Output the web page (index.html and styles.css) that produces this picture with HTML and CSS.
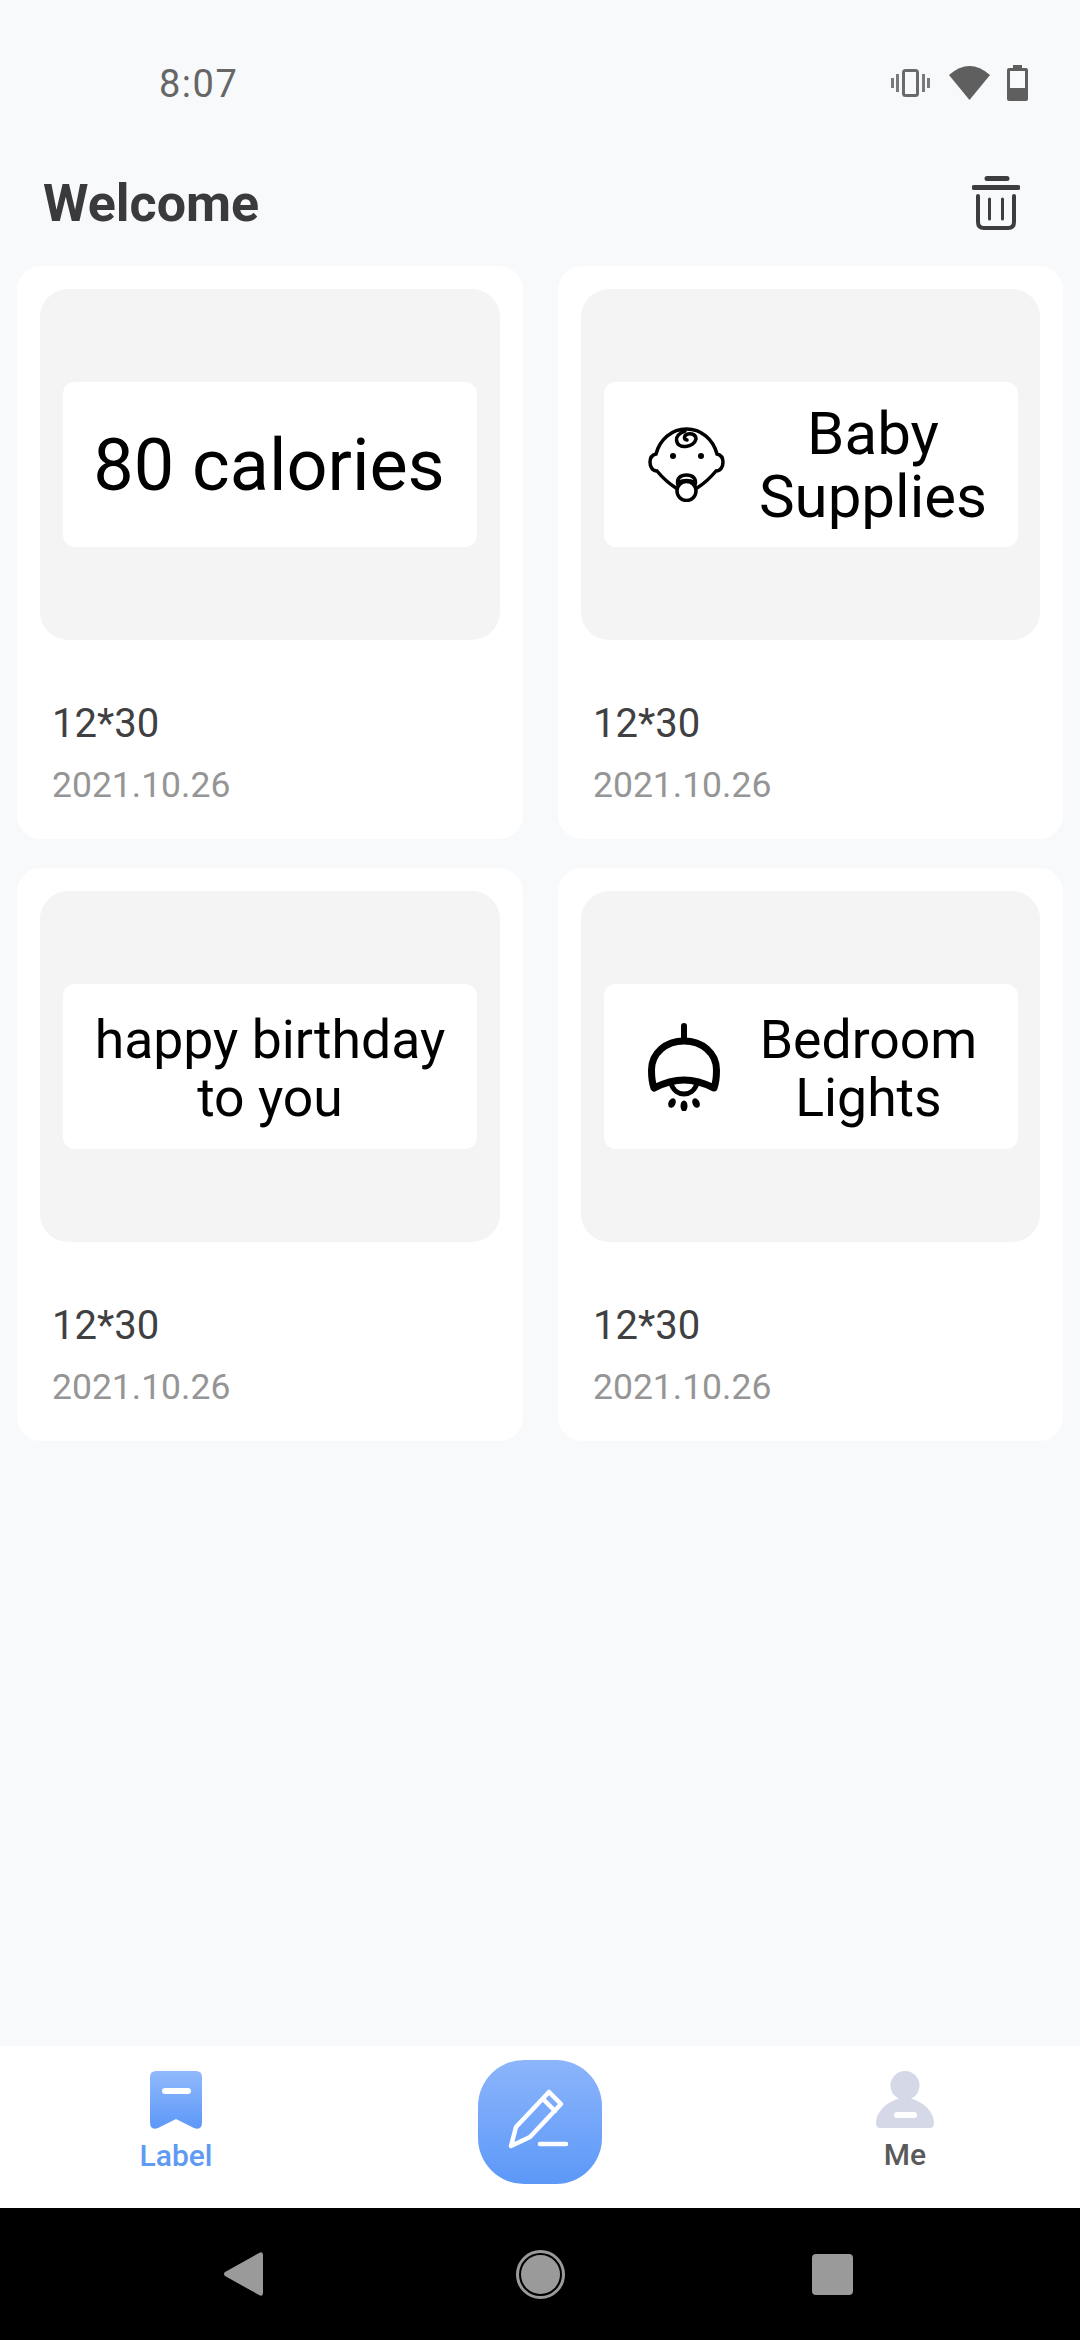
FILE: index.html
```html
<!DOCTYPE html>
<html lang="en">
<head>
<meta charset="utf-8">
<title>Welcome</title>
<link rel="stylesheet" href="styles.css">
</head>
<body>
<div class="screen">
  <div class="status">
    <span class="time">8:07</span>
    <div class="status-icons">
      <svg class="ic-vib" width="39" height="28" viewBox="0 0 39 28"><rect x="12.500" y="1.500" width="14" height="25" rx="2" fill="none" stroke="#6a6a6a" stroke-width="3"/><path d="M5 5h3v18H5zM31 5h3v18h-3zM0 9h3v10H0zM36 9h3v10h-3z" fill="#7a7a7a"/></svg>
      <svg class="ic-wifi" width="41" height="34" viewBox="0 0 41 34"><path d="M20.500 34L0 9Q20.500-9 41 9Z" fill="#5f5f5f"/></svg>
      <svg class="ic-bat" width="21" height="36" viewBox="0 0 21 36"><path d="M6 0h9v3h4q2 0 2 2v29q0 2-2 2H2q-2 0-2-2V5q0-2 2-2h4z" fill="#5f5f5f"/><rect x="3" y="6" width="15" height="17" fill="#f8f9fb"/></svg>
    </div>
  </div>
  <header class="head">
    <h1 class="title">Welcome</h1>
    <svg class="trash" width="48" height="54" viewBox="0 0 48 54"><path d="M15 2.500h20M2 11.500h44" fill="none" stroke="#3d3d40" stroke-width="5" stroke-linecap="round"/><path d="M6 20v26q0 6 6 6h24q6 0 6-6V20" fill="none" stroke="#3d3d40" stroke-width="4" stroke-linecap="round"/><path d="M17.500 23v20M30.500 23v20" fill="none" stroke="#3d3d40" stroke-width="3" stroke-linecap="round"/></svg>
  </header>
  <main class="grid">
    <article class="card">
      <div class="thumb"><div class="tag"><div class="tag-text big">80 calories</div></div></div>
      <div class="size">12*30</div>
      <div class="date">2021.10.26</div>
    </article>
    <article class="card">
      <div class="thumb"><div class="tag with-icon">
        <svg class="tag-icon" width="77" height="75" viewBox="0 0 77 75" fill="none" stroke="#000" stroke-width="3.500" stroke-linecap="round"><path d="M28 61C20 56 14 50 9 44 4 44 2 39 2 35 2 31 4 28 8 27 12 12 24 2 38.500 2 53 2 65 12 69 27 73 28 75 31 75 35 75 39 73 44 68 44 63 50 57 56 49 61"/><path d="M37 4C31 6 28 10 28.500 13 29 18 33 20 38 19.500 43 19 47 16 48 12 48 8 44 6 40 7 36 8 35 12 39 13"/><circle cx="25" cy="29" r="3" fill="#000" stroke="none"/><circle cx="53" cy="29" r="3" fill="#000" stroke="none"/><circle cx="38.500" cy="64" r="9.500"/><path d="M30 58C28 51 33 48 38.500 48 44 48 49 51 47 58M31 55C35 53 42 53 46 55"/></svg>
        <div class="tag-text mid">Baby Supplies</div>
      </div></div>
      <div class="size">12*30</div>
      <div class="date">2021.10.26</div>
    </article>
    <article class="card">
      <div class="thumb"><div class="tag"><div class="tag-text small">happy birthday<br>to you</div></div></div>
      <div class="size">12*30</div>
      <div class="date">2021.10.26</div>
    </article>
    <article class="card">
      <div class="thumb"><div class="tag with-icon">
        <svg class="tag-icon" width="72" height="88" viewBox="0 0 72 88" fill="none" stroke="#000" stroke-width="7" stroke-linecap="round" stroke-linejoin="round"><path d="M36 3V17" stroke-width="6"/><path d="M6 65C3.500 58 3.500 52 3.500 47 3.500 30 18 18 36 18 54 18 68.500 30 68.500 47 68.500 52 68.500 58 66 65 56 60 46 57 36 57 26 57 16 60 6 65Z"/><path d="M23 60C25 68 31 71 36 71 41 71 47 68 49 60" stroke-width="5"/><ellipse cx="24" cy="80" rx="3.500" ry="5" fill="#000" stroke="none" transform="rotate(25 24 80)"/><ellipse cx="36" cy="83" rx="3.500" ry="5.500" fill="#000" stroke="none"/><ellipse cx="48" cy="80" rx="3.500" ry="5" fill="#000" stroke="none" transform="rotate(-25 48 80)"/></svg>
        <div class="tag-text small">Bedroom<br>Lights</div>
      </div></div>
      <div class="size">12*30</div>
      <div class="date">2021.10.26</div>
    </article>
  </main>
  <nav class="tabbar">
    <div class="tab active">
      <svg width="52" height="58" viewBox="0 0 52 58"><defs><linearGradient id="gl" x1="0" y1="0" x2="0" y2="1"><stop offset="0" stop-color="#91b9fc"/><stop offset="1" stop-color="#5c98f8"/></linearGradient></defs><path d="M6 0H46Q52 0 52 6V51Q52 60 44 57L26 48 8 57Q0 60 0 51V6Q0 0 6 0Z" fill="url(#gl)"/><rect x="12" y="17" width="29" height="6" rx="3" fill="#fff"/></svg>
      <span class="tab-label">Label</span>
    </div>
    <button class="fab" type="button" aria-label="New">
      <svg width="124" height="124" viewBox="0 0 124 124" fill="none" stroke="#fff" stroke-width="4.500" stroke-linecap="round" stroke-linejoin="round"><path d="M33 86L38 67 71 32 83 44 52 77Z"/><path d="M65 39L77 51"/><path d="M62 84H88"/></svg>
    </button>
    <div class="tab">
      <svg width="58" height="57" viewBox="0 0 58 57"><circle cx="29" cy="14.500" r="14.500" fill="#d5d8e6"/><path d="M4 57Q0 57 0 52C0 40 14 27 29 27 44 27 58 40 58 52Q58 57 54 57Z" fill="#d5d8e6"/><rect x="18" y="41" width="23" height="6" rx="3" fill="#fff"/></svg>
      <span class="tab-label">Me</span>
    </div>
  </nav>
  <div class="sysnav">
    <svg class="sys-back" width="40" height="44" viewBox="0 0 40 44"><path d="M1 24Q-1 22 1 20L35 1Q39-1 39 3V41Q39 45 35 43Z" fill="#9a9a9a"/></svg>
    <svg class="sys-home" width="49" height="49" viewBox="0 0 49 49"><circle cx="24.500" cy="24.500" r="23" fill="none" stroke="#9a9a9a" stroke-width="3"/><circle cx="24.500" cy="24.500" r="19.500" fill="#9a9a9a"/></svg>
    <svg class="sys-recent" width="41" height="41" viewBox="0 0 41 41"><rect width="41" height="41" rx="4" fill="#9a9a9a"/></svg>
  </div>
</div>
</body>
</html>
```
FILE: styles.css
```css
* { box-sizing: border-box; }
html, body { margin: 0; padding: 0; }
body { width: 1080px; height: 2340px; background: #f8f9fb; font-family: Roboto, "Liberation Sans", sans-serif; overflow: hidden; }
.screen { display: flex; flex-direction: column; width: 1080px; height: 2340px; }

.status { height: 140px; padding: 28px 52px 0 159px; display: flex; align-items: center; justify-content: space-between; flex: none; }
.time { font-size: 38px; letter-spacing: 1.5px; color: #666; font-family: Roboto, sans-serif; }
.status-icons { display: flex; align-items: center; margin-top: -2px; }
.ic-wifi { margin-left: 19px; }
.ic-bat { margin-left: 17px; }

.head { height: 126px; flex: none; padding: 0 60px 0 43px; display: flex; align-items: center; justify-content: space-between; }
.title { margin: 0; font-size: 52px; font-weight: 700; color: #3a3a3c; }
.trash { display: block; }

.grid { display: grid; grid-template-columns: 506px 505px; grid-auto-rows: 573px; column-gap: 35px; row-gap: 29px; padding: 0 17px; flex: 1; align-content: start; }
.card { background: #fff; border-radius: 24px; padding: 23px 23px 0; }
.thumb { height: 351px; background: #f4f4f5; border-radius: 28px; display: flex; align-items: center; justify-content: center; }
.tag { width: 414px; height: 165px; background: #fff; border-radius: 12px; display: flex; align-items: center; justify-content: center; }
.tag.with-icon { padding-left: 44px; }
.tag-icon { flex: none; }
.tag-text { flex: 1; text-align: center; color: #000; }
.big { font-size: 72px; line-height: 84px; padding: 2px 2px 0 0; }
.mid { font-size: 60px; line-height: 63px; padding-left: 4px; }
.small { font-size: 53.500px; line-height: 58px; padding-top: 4px; }
.size { margin: 60px 0 0 12px; font-size: 40px; line-height: 47px; color: #404042; }
.date { margin: 17px 0 0 12px; font-size: 35.500px; line-height: 42px; color: #959595; }

.tabbar { height: 162px; flex: none; background: #fff; display: flex; justify-content: space-between; padding: 0 115px 0 116px; align-items: flex-start; }
.tab { width: 120px; padding-top: 25px; display: flex; flex-direction: column; align-items: center; }
.tab svg { display: block; }
.tab-label { font-size: 30px; line-height: 36px; font-weight: 500; color: #5a5a5a; margin-top: 9px; }
.tab.active .tab-label { color: #609af2; }
.fab { width: 124px; height: 124px; margin: 14px 0 0 -2px; padding: 0; border: 0; border-radius: 46px; background: linear-gradient(180deg, #8cb5fb, #5c98f8); }
.fab svg { display: block; }

.sysnav { height: 132px; flex: none; background: #000; display: flex; align-items: center; padding-left: 224px; }
.sys-home { margin-left: 252px; }
.sys-recent { margin-left: 247px; }
```
